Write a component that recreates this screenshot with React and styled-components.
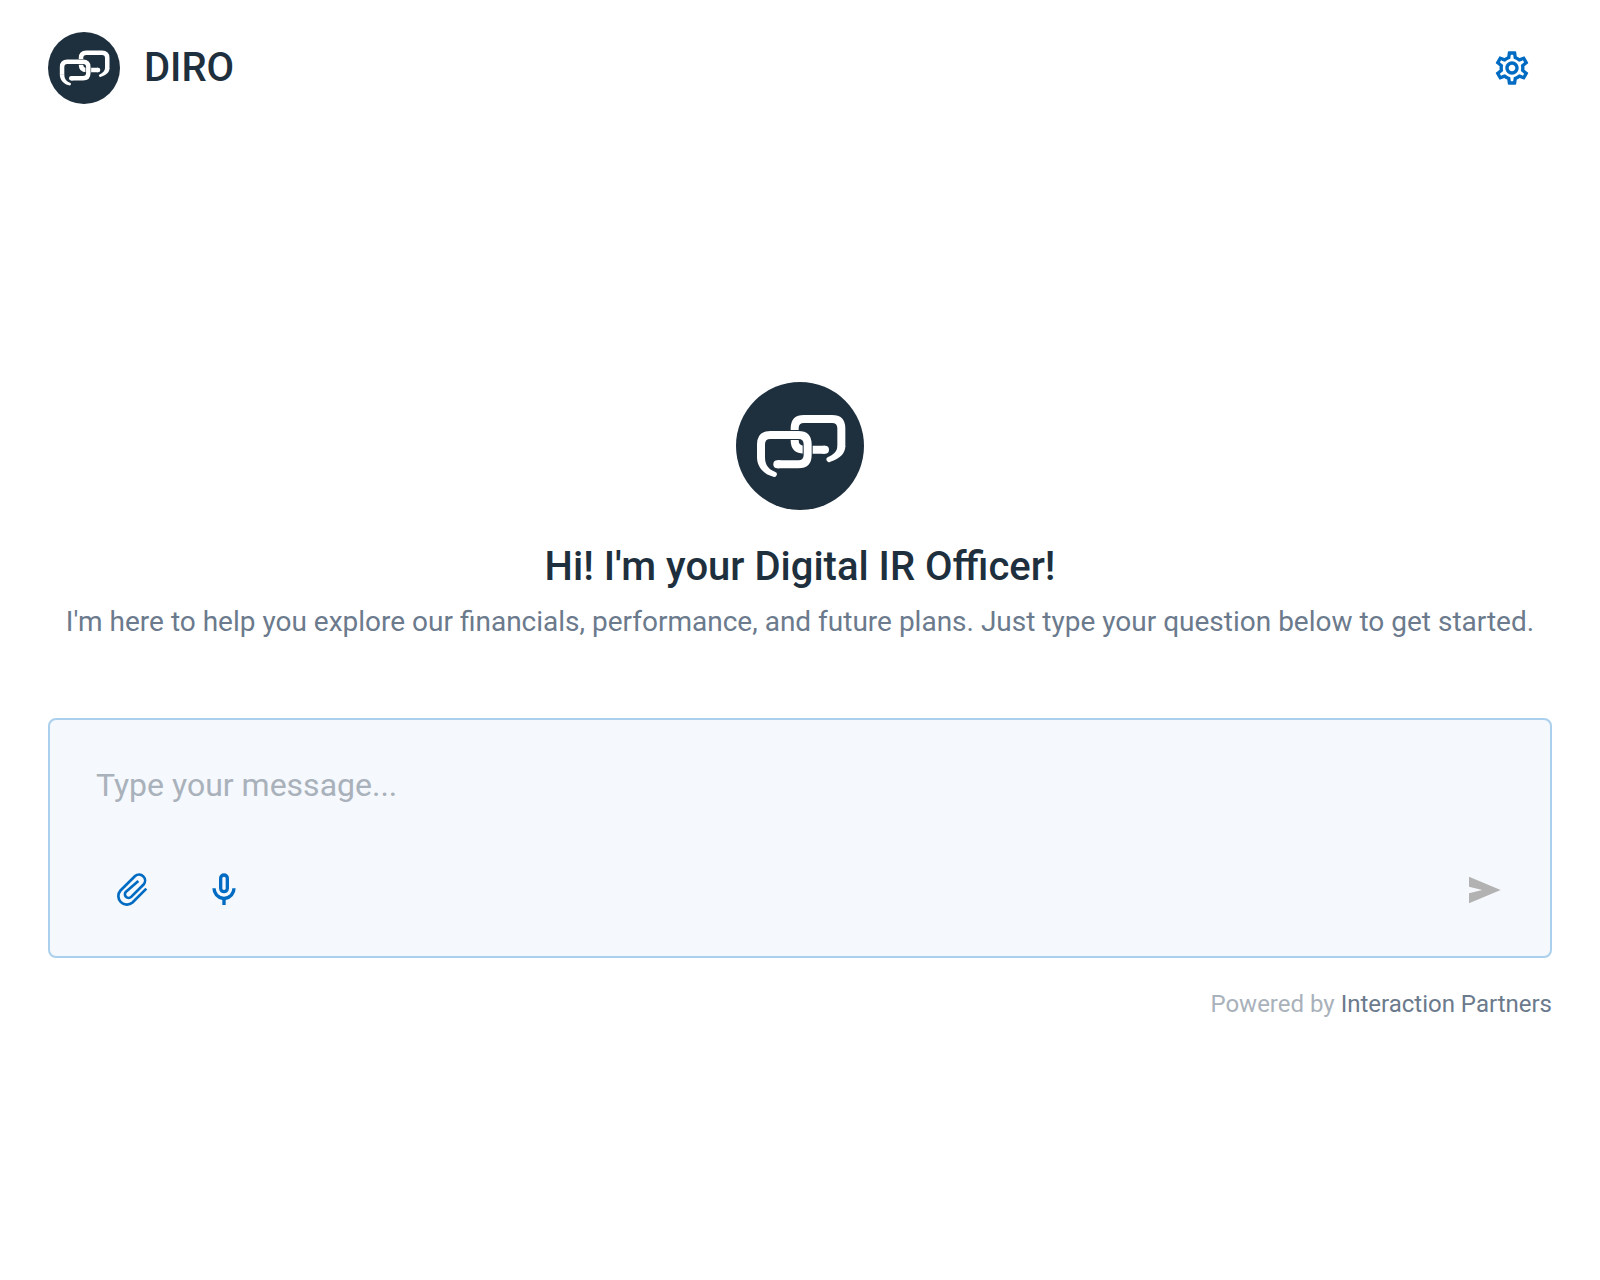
import React, { useState } from 'react'
import styled, { createGlobalStyle } from 'styled-components'
import { MdOutlineSettings } from 'react-icons/md'

const GlobalStyle = createGlobalStyle`
  * {
    box-sizing: border-box;
  }
  body {
    margin: 0;
    background-color: #fff;
    color: #1e2f3d;
    font-family: Roboto, "Liberation Sans", sans-serif;
  }
`;

const Page = styled.div`
  display: flex;
  flex-direction: column;
  min-height: 100vh;
`;

const Header = styled.header`
  display: flex;
  align-items: center;
  justify-content: space-between;
  padding: 28px 48px;
`;

const Brand = styled.div`
  display: flex;
  align-items: center;
  gap: 24px;
`;

const BrandName = styled.span`
  font-size: 40px;
  font-weight: 500;
  line-height: 50px;
`;

const Logo = styled.svg`
  display: block;
  flex-shrink: 0;
  width: ${({ $size }) => $size}px;
  height: ${({ $size }) => $size}px;
`;

const Main = styled.main`
  display: flex;
  flex: 1;
  flex-direction: column;
  justify-content: center;
  padding: 0 48px 16px;
`;

const Welcome = styled.section`
  display: flex;
  flex-direction: column;
  align-items: center;
  text-align: center;
  margin-bottom: 76px;
`;

const Title = styled.h1`
  margin: 32px 0 10px;
  font-size: 40px;
  font-weight: 500;
  line-height: 50px;
`;

const Subtitle = styled.p`
  margin: 0;
  font-size: 28px;
  line-height: 40px;
  color: #6b7a8c;
`;

const Composer = styled.form`
  display: flex;
  flex-direction: column;
  gap: 50px;
  padding: 46px 46px 30px;
  border: 2px solid #abd0ed;
  border-radius: 8px;
  background-color: #f5f8fd;
`;

const MessageInput = styled.textarea`
  display: block;
  width: 100%;
  height: 38px;
  padding: 0;
  border: none;
  outline: none;
  resize: none;
  overflow: hidden;
  background: transparent;
  color: #1e2f3d;
  font-family: inherit;
  font-size: 32px;
  line-height: 38px;

  &::placeholder {
    color: #a9b1bb;
    opacity: 1;
  }
`;

const Toolbar = styled.div`
  display: flex;
  align-items: center;
  justify-content: space-between;
`;

const Tools = styled.div`
  display: flex;
  gap: 20px;
`;

const IconButton = styled.button`
  display: flex;
  align-items: center;
  justify-content: center;
  width: ${({ $size }) => $size}px;
  height: ${({ $size }) => $size}px;
  padding: 0;
  border: none;
  border-radius: 50%;
  background: transparent;
  color: #006bc2;
  cursor: pointer;

  &:disabled {
    color: #b2b2b2;
    cursor: default;
  }
`;

const Footer = styled.footer`
  margin-top: 32px;
  font-size: 24px;
  line-height: 28px;
  text-align: right;
  color: #a9b1bb;
`;

const FooterLink = styled.a`
  color: #6b7a8c;
  text-decoration: none;
`;

const frontLink = 'M75 228V187Q75 159 103 159H187Q215 159 215 187V219Q215 247 187 247H124'

const DiroLogo = ({ size }) => {
  return (
    <Logo $size={size} viewBox='0 0 384 384' fill='none' aria-hidden='true'>
      <circle cx='192' cy='192' r='192' fill='#1e2f3d' />
      <g stroke='#fff' strokeWidth='24'>
        <path d='M316 194V139Q316 111 288 111H204Q176 111 176 139V175Q176 203 204 203H267' />
        <path d='M264 203H267' strokeLinecap='round' />
      </g>
      <path d='M328 192C328 214 312 230 283 239A7 7 0 0 1 275 226C292 218 304 208 304 192Z' fill='#fff' />
      <path d={frontLink} stroke='#1e2f3d' strokeWidth='30' />
      <path d={frontLink} stroke='#fff' strokeWidth='24' />
      <path d='M124 247H128' stroke='#fff' strokeWidth='24' strokeLinecap='round' />
      <path d='M63 226C63 252 80 276 112 284A7 7 0 0 0 118 270C98 262 87 250 87 226Z' fill='#fff' />
    </Logo>
  )
}

const ClipIcon = () => (
  <svg width='40' height='40' viewBox='0 0 120 120' fill='none' stroke='currentColor' strokeWidth='8' aria-hidden='true'>
    <path d='M103 56L61.5 97.5A25.5 25.5 0 0 1 25.5 61.5L69.3 18.3A18 18 0 0 1 94.7 43.7L57.5 80.5A10.5 10.5 0 0 1 42 65L79 33' />
  </svg>
)

const MicIcon = () => (
  <svg width='40' height='40' viewBox='0 -960 960 960' fill='currentColor' aria-hidden='true'>
    <path d='M480-400q-50 0-85-35t-35-85v-240q0-50 35-85t85-35q50 0 85 35t35 85v240q0 50-35 85t-85 35Zm-40 280v-123q-104-14-172-93t-68-184h80q0 83 58.5 141.5T480-320q83 0 141.5-58.5T680-520h80q0 105-68 184t-172 93v123h-80Zm40-360q17 0 28.5-11.5T520-520v-240q0-17-11.5-28.5T480-800q-17 0-28.5 11.5T440-760v240q0 17 11.5 28.5T480-480Z' />
  </svg>
)

const SendIcon = () => (
  <svg width='40' height='40' viewBox='0 -960 960 960' fill='currentColor' aria-hidden='true'>
    <path d='M120-160v-240l320-80-320-80v-240l760 320-760 320Z' />
  </svg>
)

const App = () => {
  const [message, setMessage] = useState('')

  const handleSubmit = (e) => {
    e.preventDefault()
    setMessage('')
  }

  return (
    <Page>
      <GlobalStyle />
      <Header>
        <Brand>
          <DiroLogo size={72} />
          <BrandName>DIRO</BrandName>
        </Brand>
        <IconButton type='button' $size={80} aria-label='Settings'>
          <MdOutlineSettings size={40} />
        </IconButton>
      </Header>
      <Main>
        <Welcome>
          <DiroLogo size={128} />
          <Title>Hi! I'm your Digital IR Officer!</Title>
          <Subtitle>
            I'm here to help you explore our financials, performance, and future plans. Just type your question below to get started.
          </Subtitle>
        </Welcome>
        <Composer onSubmit={handleSubmit}>
          <MessageInput
            rows={1}
            aria-label='Message'
            placeholder='Type your message...'
            value={message}
            onChange={(e) => setMessage(e.target.value)}
          />
          <Toolbar>
            <Tools>
              <IconButton type='button' $size={72} aria-label='Attach file'>
                <ClipIcon />
              </IconButton>
              <IconButton type='button' $size={72} aria-label='Record voice'>
                <MicIcon />
              </IconButton>
            </Tools>
            <IconButton type='submit' $size={40} aria-label='Send' disabled={!message.trim()}>
              <SendIcon />
            </IconButton>
          </Toolbar>
        </Composer>
        <Footer>
          Powered by <FooterLink href='#'>Interaction Partners</FooterLink>
        </Footer>
      </Main>
    </Page>
  )
}

export default App
